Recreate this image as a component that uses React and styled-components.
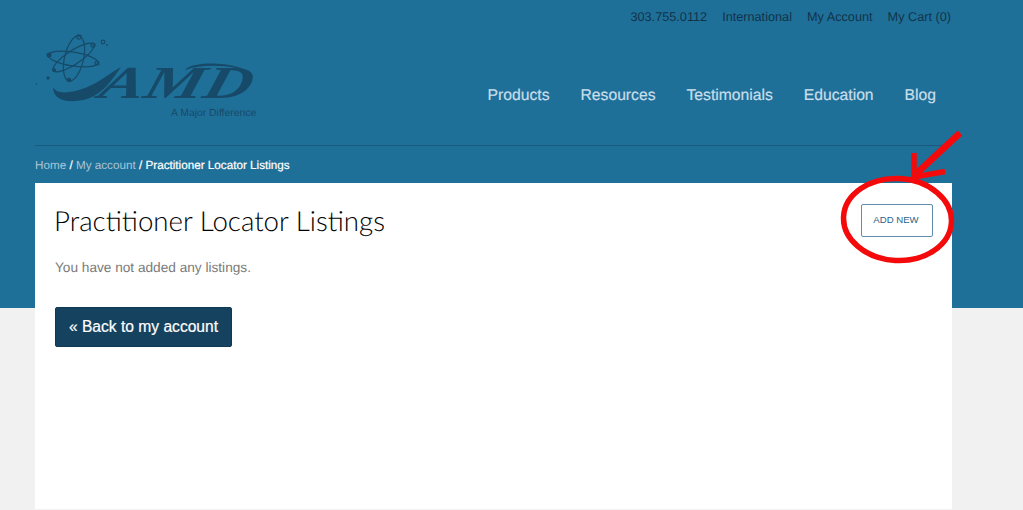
import styled, { createGlobalStyle } from 'styled-components'

const GlobalStyle = createGlobalStyle`
  html, body { margin: 0; padding: 0; background: #f1f1f1; }
  body {
    font-family: "Liberation Sans", Arial, sans-serif;
    text-rendering: geometricPrecision;
    overflow: hidden;
  }
`

const topLinks = ['303.755.0112', 'International', 'My Account', 'My Cart (0)']
const navLinks = ['Products', 'Resources', 'Testimonials', 'Education', 'Blog']

const Logo = () => (
  <LogoBox>
    <svg width="225" height="92" viewBox="0 0 225 92" fill="none">
      <g stroke="#174a68" strokeWidth="1.2">
        <ellipse cx="39" cy="25.5" rx="9.5" ry="23" transform="rotate(13 39 25.5)" />
        <ellipse cx="38" cy="26" rx="25" ry="7" transform="rotate(9 38 26)" />
        <ellipse cx="38.5" cy="24.5" rx="24" ry="7" transform="rotate(-33 38.5 24.5)" />
        <circle cx="44" cy="4" r="2.2" />
        <circle cx="58" cy="12" r="2" />
        <circle cx="62" cy="30" r="2" />
        <circle cx="68" cy="9" r="1.8" />
      </g>
      <g fill="#174a68">
        <circle cx="14" cy="22" r="2.5" />
        <circle cx="19" cy="37" r="2" />
        <circle cx="34" cy="47" r="2.2" />
        <circle cx="13" cy="45" r="1.7" />
        <circle cx="1.5" cy="51" r="0.8" />
        <circle cx="72" cy="12" r="0.9" />
        <path d="M18 54 C22 62 36 60 50 55 C66 49 74 40 86 34 C78 46 68 61 52 66 C38 70 18 70 18 54Z" />
        <path d="M150 37 C170 30 205 32 216 42 C212 34 188 29 166 31 C158 32 152 34 150 37Z" />
      </g>
      <AmdMark transform="translate(62 65) skewX(-16)" textLength="152" lengthAdjust="spacingAndGlyphs">AMD</AmdMark>
    </svg>
    <Tagline>A Major Difference</Tagline>
  </LogoBox>
)

const Annotation = () => (
  <Overlay width="140" height="145" viewBox="0 0 140 145" fill="none">
    <g stroke="#f40a0a" strokeWidth="5.5">
      <ellipse cx="72.5" cy="94.5" rx="54" ry="41" transform="rotate(3 72.5 94.5)" />
      <path d="M135 8 L92 48" strokeWidth="6.5" />
      <path d="M89 28 L89 53" />
      <path d="M89 52 L120 46.5" />
    </g>
  </Overlay>
)

export default function App() {
  return (
    <Page>
      <GlobalStyle />
      <Banner>
        <Inner>
          <TopBar>
            {topLinks.map((t) => <TopLink key={t}>{t}</TopLink>)}
          </TopBar>
          <MainRow>
            <Logo />
            <Nav>
              {navLinks.map((t) => <NavLink key={t}>{t}</NavLink>)}
            </Nav>
          </MainRow>
          <Crumbs>
            <CrumbLink>Home</CrumbLink> / <CrumbLink>My account</CrumbLink> / Practitioner Locator Listings
          </Crumbs>
        </Inner>
      </Banner>
      <Card>
        <CardHead>
          <Title>Practitioner Locator Listings</Title>
          <AddButton>ADD NEW</AddButton>
        </CardHead>
        <Empty>You have not added any listings.</Empty>
        <BackButton>« Back to my account</BackButton>
        <Annotation />
      </Card>
    </Page>
  )
}

const Page = styled.div`
  position: relative;
  width: 1023px;
  height: 510px;
  overflow: hidden;
  background: #f1f1f1;
`

const Banner = styled.header`
  height: 308px;
  background: #1f7099;
`

const Inner = styled.div`
  width: 917px;
  margin-left: 35px;
`

const TopBar = styled.div`
  display: flex;
  justify-content: flex-end;
  gap: 15px;
  height: 33px;
  padding-right: 1px;
  align-items: center;
`

const TopLink = styled.a`
  font-size: 12.7px;
  color: #10334b;
`

const MainRow = styled.div`
  display: flex;
  justify-content: space-between;
  height: 112px;
  border-bottom: 1px solid #195a7e;
`

const LogoBox = styled.div`
  position: relative;
  width: 225px;
  height: 92px;
`

const AmdMark = styled.text`
  font-family: "Liberation Serif", serif;
  font-style: italic;
  font-weight: 700;
  font-size: 46px;
  fill: #174a68;
`

const Tagline = styled.span`
  position: absolute;
  left: 136px;
  top: 76px;
  font-size: 10.4px;
  line-height: 10px;
  white-space: nowrap;
  color: #174a68;
`

const Nav = styled.nav`
  display: flex;
  gap: 31px;
  padding: 54px 16px 0 0;
`

const NavLink = styled.a`
  font-size: 15.7px;
  line-height: 18px;
  color: #c8deea;
  -webkit-text-stroke: 0.2px #c8deea;
`

const Crumbs = styled.div`
  padding-top: 13px;
  font-size: 11.7px;
  line-height: 14px;
  color: #fff;
  -webkit-text-stroke: 0.2px #fff;
`

const CrumbLink = styled.a`
  color: #a9c6d6;
  -webkit-text-stroke: 0;
`

const Card = styled.main`
  position: absolute;
  left: 35px;
  top: 183px;
  width: 917px;
  height: 326px;
  box-sizing: border-box;
  padding: 25px 19px 0 20px;
  background: #fff;
`

const CardHead = styled.div`
  display: flex;
  justify-content: space-between;
  align-items: flex-start;
`

const Title = styled.h1`
  margin: -1px 0 0 -1px;
  font-family: "Lato", "Liberation Sans", sans-serif;
  font-weight: 300;
  font-size: 27.7px;
  line-height: 28px;
  color: #000;
`

const AddButton = styled.button`
  width: 72px;
  height: 33px;
  margin-top: -4px;
  padding: 0 2px 2px 0;
  box-sizing: border-box;
  background: #fff;
  border: 1px solid #5f8dab;
  border-radius: 2px;
  font-family: "Liberation Sans", sans-serif;
  font-size: 9.6px;
  color: #2c6287;
`

const Empty = styled.p`
  margin: 24px 0 0;
  font-size: 13.65px;
  line-height: 14px;
  color: #7a7a7a;
`

const BackButton = styled.button`
  display: block;
  width: 177px;
  height: 40px;
  margin-top: 32px;
  padding: 0;
  background: #15435f;
  border: 1px solid #103a54;
  border-radius: 2px;
  font-family: "Liberation Sans", sans-serif;
  font-size: 15.6px;
  color: #fff;
  -webkit-text-stroke: 0.2px #fff;
`

const Overlay = styled.svg`
  position: absolute;
  right: -13px;
  top: -58px;
`
